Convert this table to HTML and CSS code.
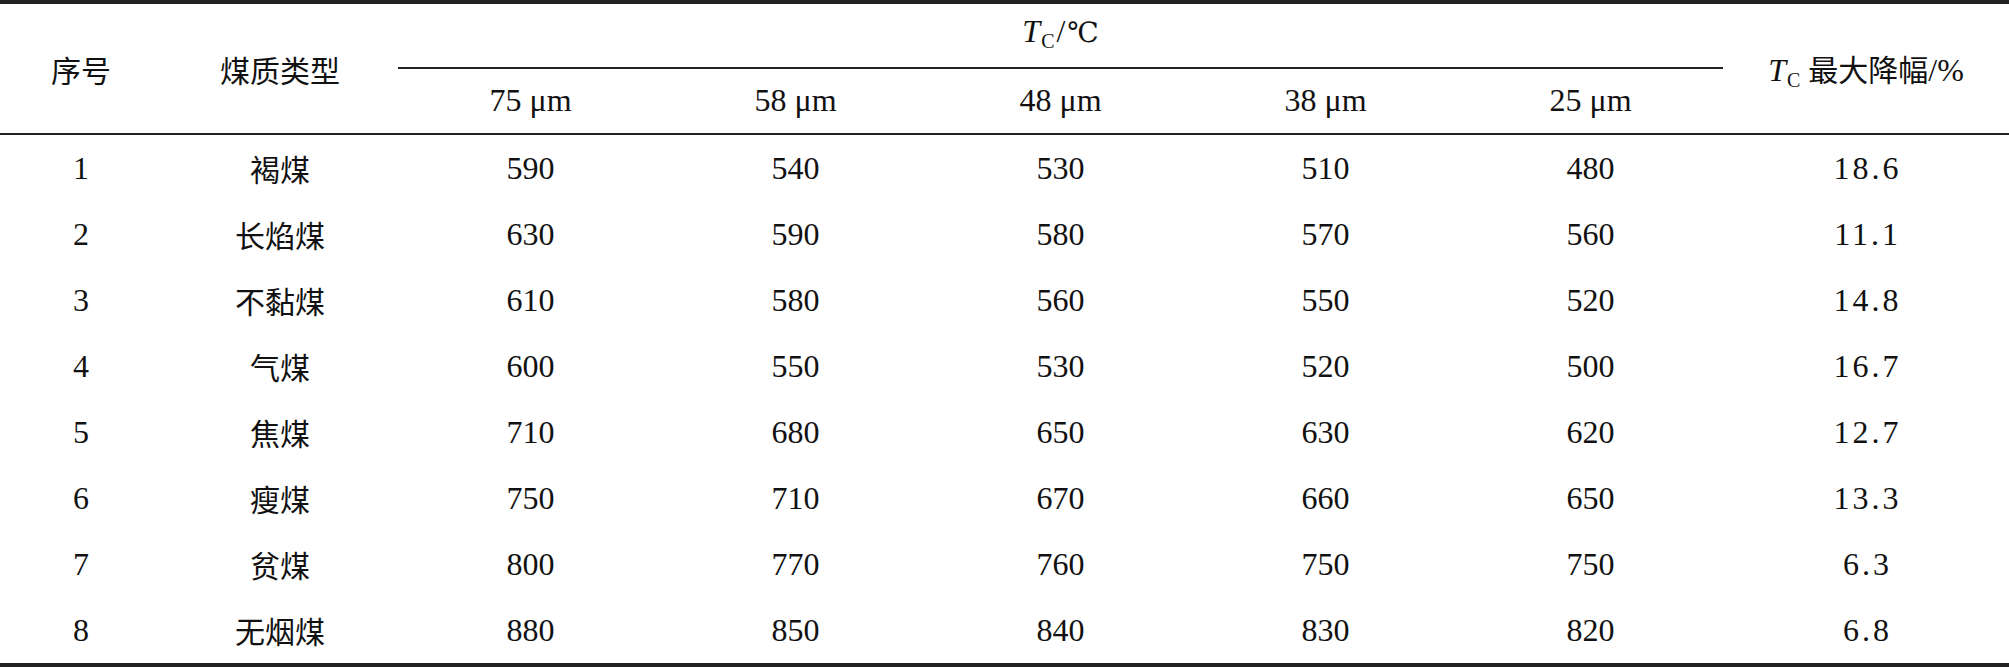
FILE: index.html
```html
<!DOCTYPE html>
<html lang="zh-CN">
<head>
    <meta charset="UTF-8">
    <meta name="viewport" content="width=device-width, initial-scale=1.0">
    <title>不同粒度煤样的 TC</title>
    <link rel="stylesheet" href="styles.css">
</head>
<body>
    <table class="data">
        <colgroup>
            <col class="c-no">
            <col class="c-type">
            <col class="c-val">
            <col class="c-val">
            <col class="c-val">
            <col class="c-val">
            <col class="c-val">
            <col class="c-drop">
        </colgroup>
        <thead>
            <tr class="head-top">
                <th rowspan="2" class="zh">序号</th>
                <th rowspan="2" class="zh">煤质类型</th>
                <th colspan="5" class="group"><i>T</i><sub>C</sub><span class="slash">/</span><span class="deg">℃</span></th>
                <th rowspan="2"><i>T</i><sub>C</sub> <span class="zh">最大降幅</span>/%</th>
            </tr>
            <tr class="head-sub">
                <th>75 μm</th>
                <th>58 μm</th>
                <th>48 μm</th>
                <th>38 μm</th>
                <th>25 μm</th>
            </tr>
        </thead>
        <tbody>
            <tr><td>1</td><td class="zh">褐煤</td><td>590</td><td>540</td><td>530</td><td>510</td><td>480</td><td class="drop">18.6</td></tr>
            <tr><td>2</td><td class="zh">长焰煤</td><td>630</td><td>590</td><td>580</td><td>570</td><td>560</td><td class="drop">11.1</td></tr>
            <tr><td>3</td><td class="zh">不黏煤</td><td>610</td><td>580</td><td>560</td><td>550</td><td>520</td><td class="drop">14.8</td></tr>
            <tr><td>4</td><td class="zh">气煤</td><td>600</td><td>550</td><td>530</td><td>520</td><td>500</td><td class="drop">16.7</td></tr>
            <tr><td>5</td><td class="zh">焦煤</td><td>710</td><td>680</td><td>650</td><td>630</td><td>620</td><td class="drop">12.7</td></tr>
            <tr><td>6</td><td class="zh">瘦煤</td><td>750</td><td>710</td><td>670</td><td>660</td><td>650</td><td class="drop">13.3</td></tr>
            <tr><td>7</td><td class="zh">贫煤</td><td>800</td><td>770</td><td>760</td><td>750</td><td>750</td><td class="drop">6.3</td></tr>
            <tr><td>8</td><td class="zh">无烟煤</td><td>880</td><td>850</td><td>840</td><td>830</td><td>820</td><td class="drop">6.8</td></tr>
        </tbody>
    </table>
</body>
</html>
```

FILE: styles.css
```css
body {
    margin: 0;
    padding: 0;
    background: #fff;
    color: #111;
    font-family: "Liberation Serif", "Noto Sans CJK SC", serif;
}
.data {
    width: 2009px;
    table-layout: fixed;
    border-collapse: separate;
    border-spacing: 0;
    border-top: 4px solid #222;
    border-bottom: 4px solid #222;
}
.c-no { width: 162px; }
.c-type { width: 236px; }
.c-val { width: 265px; }
.c-drop { width: 286px; }
th, td {
    padding: 0;
    font-size: 32px;
    font-weight: normal;
    line-height: 36px;
    text-align: center;
    vertical-align: middle;
    white-space: nowrap;
}
.head-top {
    height: 65px;
}
.head-sub {
    height: 66px;
}
.head-top th[rowspan],
.head-sub th {
    border-bottom: 2px solid #222;
}
.group {
    border-bottom: 2px solid #222;
    padding-bottom: 8px;
}
.head-sub th {
    padding-bottom: 2px;
}
tbody tr {
    height: 66px;
}
.zh {
    font-family: "Noto Sans CJK SC", sans-serif;
    font-size: 30px;
}
i {
    font-style: italic;
}
sub {
    font-size: 20px;
    vertical-align: -6px;
    line-height: 0;
    margin-left: 1px;
}
.slash {
    margin: 0 2px;
}
.deg {
    font-family: "DejaVu Serif", "Noto Sans CJK SC", serif;
    font-size: 28px;
}
/* cột cuối dùng chữ số rộng hơn */
.drop {
    letter-spacing: 3px;
    padding-left: 3px;
}
```
